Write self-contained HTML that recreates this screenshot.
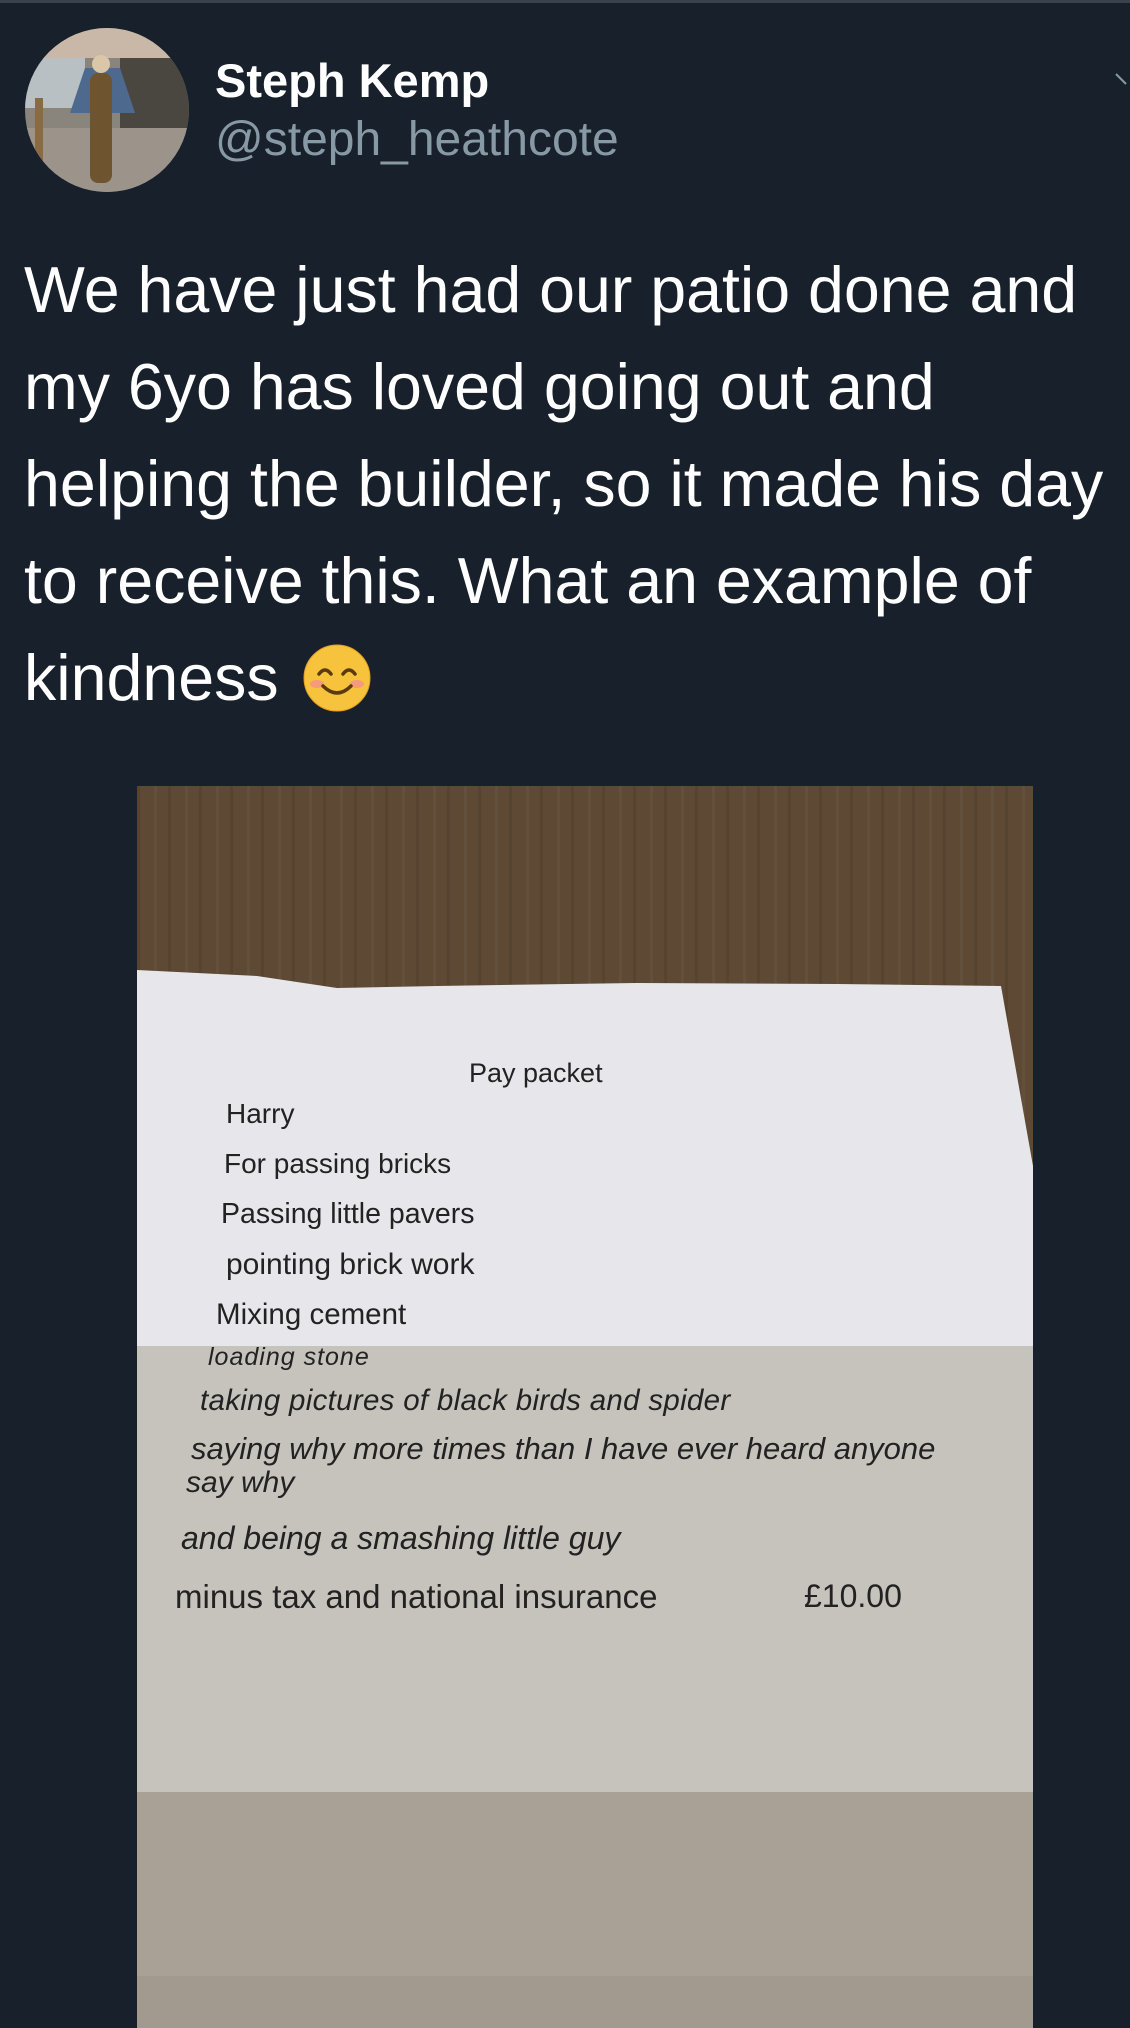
<!DOCTYPE html>
<html><head><meta charset="utf-8">
<style>
*{margin:0;padding:0;box-sizing:border-box}
body{width:1130px;height:2028px;background:#17202b;position:relative;overflow:hidden;font-family:"Liberation Sans",sans-serif}
.t{position:absolute;white-space:nowrap;line-height:1}
.p{position:absolute;white-space:nowrap;line-height:1;color:#222;font-family:"Liberation Sans",sans-serif}
</style></head><body>
<div style="position:absolute;left:0;top:0;width:1130px;height:3px;background:#3a434d"></div>
<svg style="position:absolute;left:25px;top:28px" width="164" height="164">
<defs><clipPath id="c"><circle cx="82" cy="82" r="82"/></clipPath></defs>
<g clip-path="url(#c)">
<rect width="164" height="164" fill="#8a857c"/>
<rect width="164" height="30" fill="#c9b8a8"/>
<rect y="30" width="60" height="50" fill="#b8c0c4"/>
<rect x="95" y="30" width="69" height="70" fill="#4a4640"/>
<rect y="100" width="164" height="64" fill="#9c948a"/>
<rect x="10" y="70" width="8" height="94" fill="#8a6a40"/>
<path d="M60 40 L95 40 L110 85 L45 85Z" fill="#4d6a8e"/>
<rect x="65" y="45" width="22" height="110" rx="8" fill="#6e5530"/>
<circle cx="76" cy="36" r="9" fill="#d9c7a8"/>
</g></svg>
<div class="t" style="left:215px;top:57px;font-size:47px;font-weight:bold;color:#fff">Steph Kemp</div>
<div class="t" style="left:215px;top:116px;font-size:48px;color:#8899a6">@steph_heathcote</div>
<svg style="position:absolute;left:1114px;top:70px" width="16" height="20"><path d="M2 4 L12 14" stroke="#8899a6" stroke-width="2" fill="none"/></svg>
<div class="t" style="left:24px;top:242px;font-size:64.5px;color:#fff;line-height:97px;white-space:normal;width:1110px">We have just had our patio done and<br>my 6yo has loved going out and<br>helping the builder, so it made his day<br>to receive this. What an example of<br>kindness <svg width="68" height="68" viewBox="0 0 68 68" style="vertical-align:-12px;margin-left:6px"><circle cx="34" cy="34" r="33" fill="#f7c23c"/><circle cx="34" cy="34" r="33" fill="none" stroke="#e0a020" stroke-width="1"/><ellipse cx="14" cy="40" rx="7" ry="4" fill="#f59a7a"/><ellipse cx="54" cy="40" rx="7" ry="4" fill="#f59a7a"/><path d="M16 30 Q22 22 28 30" stroke="#5a3a10" stroke-width="3.5" fill="none" stroke-linecap="round"/><path d="M40 30 Q46 22 52 30" stroke="#5a3a10" stroke-width="3.5" fill="none" stroke-linecap="round"/><path d="M20 42 Q34 56 48 42" stroke="#5a3a10" stroke-width="3.5" fill="none" stroke-linecap="round"/></svg></div>

<div style="position:absolute;left:137px;top:786px;width:896px;height:1242px;overflow:hidden;background:#5d4934">
<div style="position:absolute;inset:0;background:repeating-linear-gradient(90deg,rgba(0,0,0,0.08) 0 3px,transparent 3px 17px,rgba(255,255,255,0.04) 17px 20px,transparent 20px 31px)"></div>
<svg style="position:absolute;left:0;top:0" width="896" height="1242">
<path d="M0 184 L120 190 L200 202 L300 200 L500 197 L700 198 L864 200 L896 380 L896 1242 L0 1242Z" fill="#e7e7eb"/>
<rect x="0" y="560" width="896" height="450" fill="#c6c2bc"/>
<rect x="0" y="1006" width="896" height="236" fill="#a9a196"/>
<rect x="0" y="1190" width="896" height="52" fill="#a29a8e"/>
</svg>
</div>
<div class="p" style="left:469px;top:1060px;font-size:27px">Pay packet</div>
<div class="p" style="left:226px;top:1100px;font-size:28px">Harry</div>
<div class="p" style="left:224px;top:1150px;font-size:28px">For passing bricks</div>
<div class="p" style="left:221px;top:1200px;font-size:28.5px">Passing little pavers</div>
<div class="p" style="left:226px;top:1250px;font-size:30px">pointing brick work</div>
<div class="p" style="left:216px;top:1300px;font-size:29.5px">Mixing cement</div>
<div class="p" style="left:208px;top:1345px;font-size:25px;font-style:italic;letter-spacing:1px">loading stone</div>
<div class="p" style="left:200px;top:1386px;font-size:29.5px;font-style:italic;letter-spacing:0.3px">taking pictures of black birds and spider</div>
<div class="p" style="left:191px;top:1433px;font-size:31px;font-style:italic">saying why more times than I have ever heard anyone</div>
<div class="p" style="left:186px;top:1468px;font-size:30px;font-style:italic">say why</div>
<div class="p" style="left:181px;top:1522px;font-size:32px;font-style:italic">and being a smashing little guy</div>
<div class="p" style="left:175px;top:1580px;font-size:33px">minus tax and national insurance</div>
<div class="p" style="left:804px;top:1580px;font-size:32px">£10.00</div>
</body></html>
